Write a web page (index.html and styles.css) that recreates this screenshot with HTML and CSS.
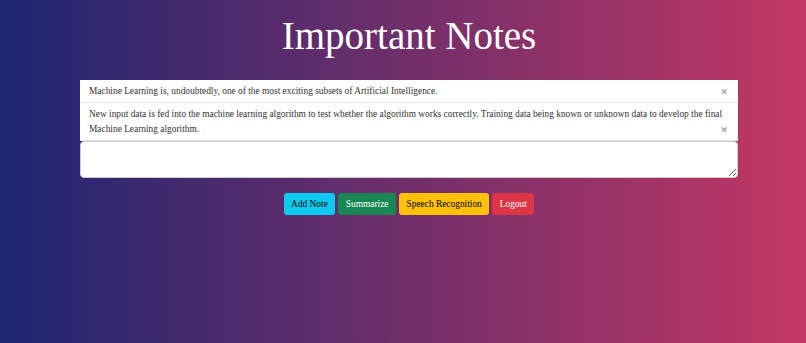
FILE: index.html
```html
<!DOCTYPE html>
<html>
<head>
<meta charset="utf-8">
<link rel="stylesheet" href="styles.css">
</head>
<body>
<div class="page">
  <h1 class="title">Important Notes</h1>
  <ul class="notes">
    <li class="note">Machine Learning is, undoubtedly, one of the most exciting subsets of Artificial Intelligence.<span class="close">&#x2715;</span></li>
    <li class="note">New input data is fed into the machine learning algorithm to test whether the algorithm works correctly. Training data being known or unknown data to develop the final Machine Learning algorithm.<span class="close">&#x2715;</span></li>
  </ul>
  <textarea class="input"></textarea>
  <div class="actions">
    <button class="btn btn-info">Add Note</button>
    <button class="btn btn-success">Summarize</button>
    <button class="btn btn-warning">Speech Recognition</button>
    <button class="btn btn-danger">Logout</button>
  </div>
</div>
</body>
</html>
```
FILE: styles.css
```css
html, body {
  margin: 0;
  height: 100%;
}
body {
  background: linear-gradient(to right, #1d2671, #c33764);
  font-family: "Liberation Serif", "Times New Roman", serif;
  overflow: hidden;
}
.page {
  width: 658px;
  margin: 0 0 0 80px;
  padding-top: 13px;
}
.title {
  margin: 0 0 21px 0;
  text-align: center;
  color: #fff;
  font-weight: normal;
  font-size: 39px;
  line-height: 46px;
}
.notes {
  list-style: none;
  margin: 0;
  padding: 0;
  background: #fff;
}
.note {
  display: flow-root;
  padding: 4px 9px 2px 9px;
  font-size: 9.4px;
  line-height: 15px;
  color: #333;
  border-bottom: 1px solid #e3e3e3;
}
.close {
  float: right;
  color: #8a8a8a;
  font-family: "DejaVu Sans", sans-serif;
  font-size: 9px;
  line-height: 16px;
  margin-right: 1px;
}
.input {
  display: block;
  box-sizing: border-box;
  width: 658px;
  height: 37px;
  margin: 0;
  border: 1px solid #ccc;
  border-radius: 4px;
  background: #fff;
}
.actions {
  display: flex;
  justify-content: center;
  gap: 3px;
  margin-top: 15px;
}
.btn {
  font-family: "Liberation Serif", "Times New Roman", serif;
  font-size: 9.4px;
  height: 22px;
  padding: 0 7.5px;
  border: none;
  border-radius: 3px;
}
.btn-info { background: #0dcaf0; color: #000; }
.btn-success { background: #198754; color: #fff; }
.btn-warning { background: #ffc107; color: #000; }
.btn-danger { background: #dc3545; color: #fff; }
```
